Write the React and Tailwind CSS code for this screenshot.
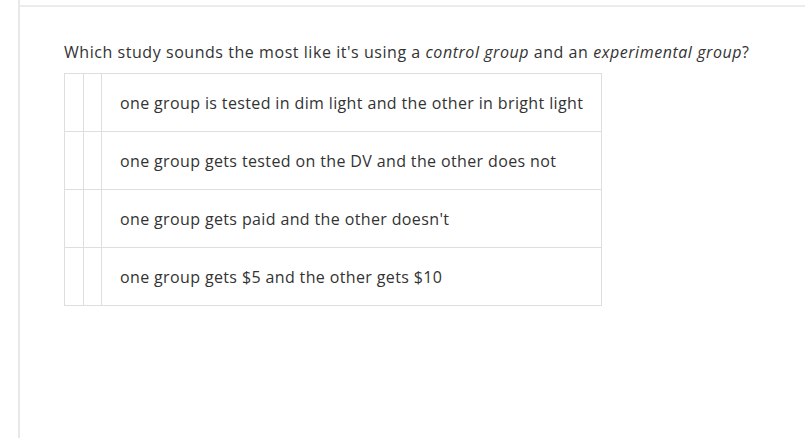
import React from 'react';

const options = [
  'one group is tested in dim light and the other in bright light',
  'one group gets tested on the DV and the other does not',
  "one group gets paid and the other doesn't",
  'one group gets $5 and the other gets $10',
];

export default function App() {
  return (
    <div className="w-[805px] h-[438px] bg-white overflow-hidden" style={{ fontFamily: '"Open Sans", Lato, sans-serif' }}>
      <div className="ml-[18px] h-full border-l-2 border-[#e8e8e8] pt-[5px]">
        <div className="border-t-2 border-[#ececec] pl-[44px] pt-[33px]">
          <p className="text-[16px] leading-[24px] tracking-[0.55px] text-[#333] mb-[9px]">
            Which study sounds the most like it's using a <i>control group</i> and an <i>experimental group</i>?
          </p>
          <div className="w-[538px] border border-[#dedede] border-b-0">
            {options.map(opt => (
              <div key={opt} className="flex h-[58px] border-b border-[#dedede]">
                <div className="w-[19px] border-r border-[#dedede]" />
                <div className="w-[18px] border-r border-[#dedede]" />
                <div className="flex-1 flex items-center pl-[18px] text-[16px] tracking-[0.37px] text-[#333]">{opt}</div>
              </div>
            ))}
          </div>
        </div>
      </div>
    </div>
  );
}
